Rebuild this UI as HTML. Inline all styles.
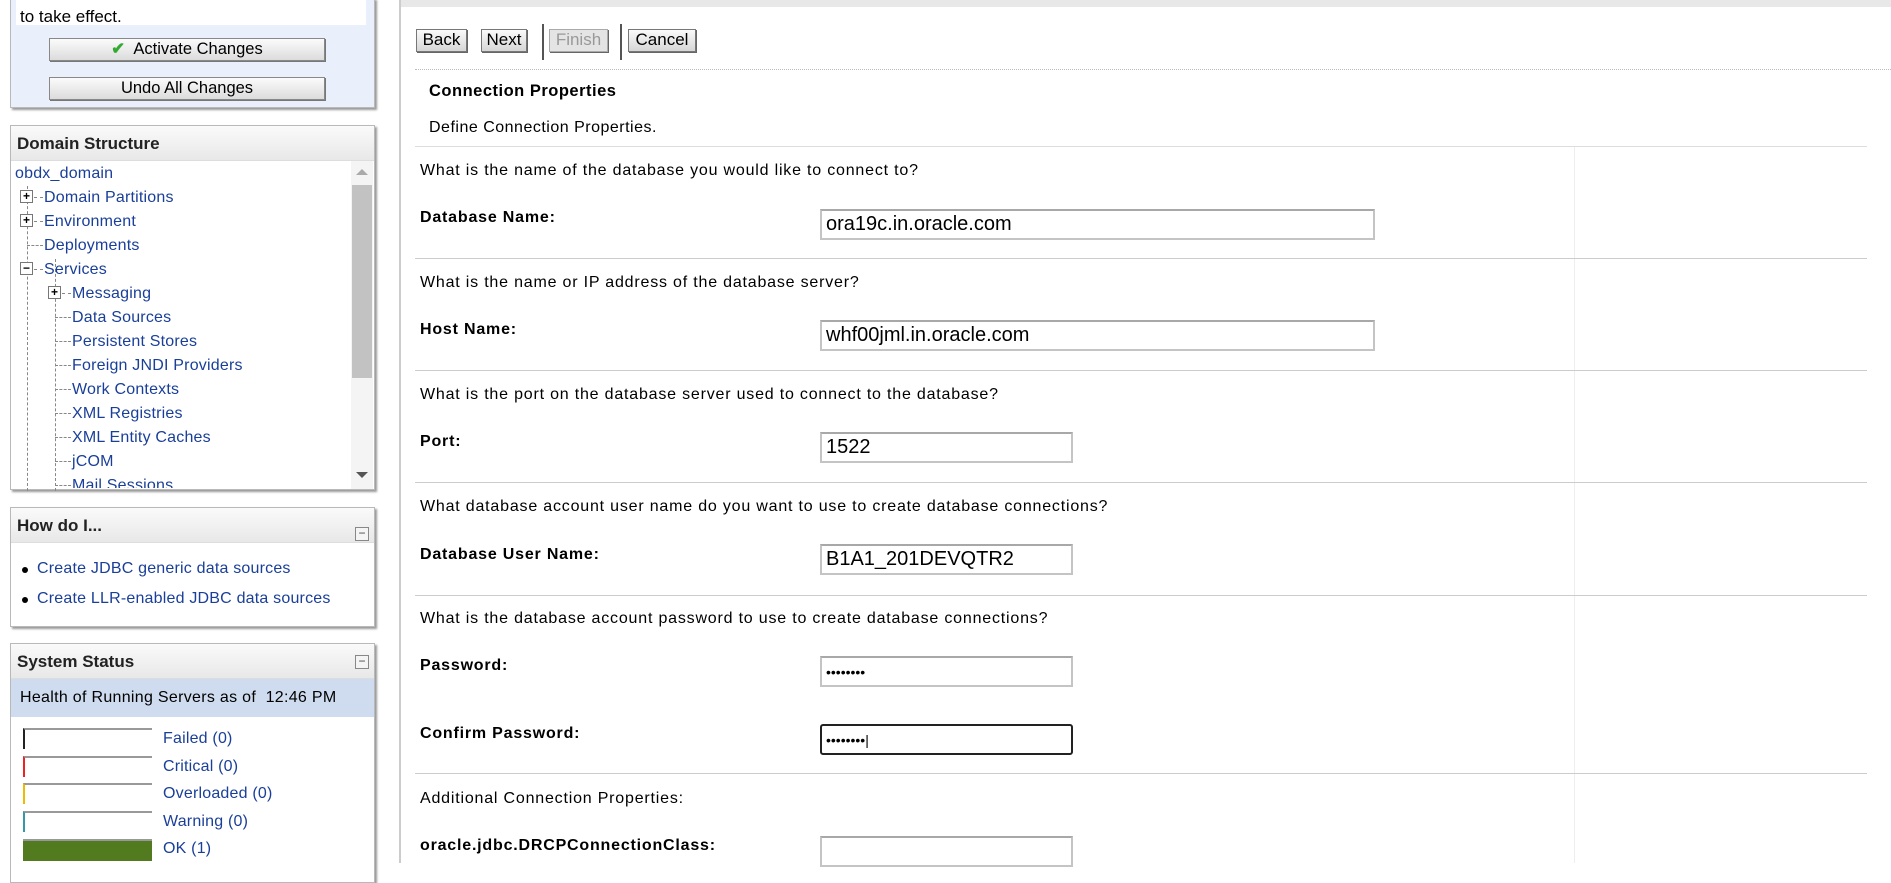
<!DOCTYPE html>
<html><head><style>
*{margin:0;padding:0;box-sizing:border-box}
body{width:1891px;height:863px;overflow:hidden;background:#fff;font-family:"Liberation Sans",Tahoma,sans-serif;position:relative;color:#000}
.a{position:absolute}
.panel{position:absolute;left:10px;width:365px;border:1px solid #b9b9b9;box-shadow:2px 2px 2px #999;background:#fff}
.hd{position:absolute;left:0;right:0;top:0;height:35px;background:linear-gradient(#fafafa,#e8e8e8);border-bottom:1px solid #ddd;font-weight:bold;font-size:17px;padding:8px 0 0 6px;color:#222}
.btn{position:absolute;border:1px solid #888;background:linear-gradient(#fbfbfb,#dcdcdc);font-size:16.5px;text-align:center;line-height:21px;box-shadow:1px 1px 0 #777}
.lk{color:#1a3f99;font-size:16px;position:absolute;white-space:nowrap;letter-spacing:0.2px}
.mn{position:absolute;width:14px;height:14px;border:1px solid #888;background:#f4f4f4;font-size:12px;line-height:10px;text-align:center;color:#444}
.pb{position:absolute;width:13px;height:13px;border:1px solid #777;background:#fff;font-size:12px;line-height:10px;text-align:center;font-weight:bold}
.q{position:absolute;left:420px;font-size:16px;letter-spacing:0.8px;white-space:nowrap}
.lb{position:absolute;left:420px;font-size:16px;font-weight:bold;letter-spacing:0.8px;white-space:nowrap}
.in{position:absolute;left:820px;height:31px;border:2px solid #c4c4c4;border-top-color:#a8a8a8;font-size:20px;padding:2px 4px;background:#fff}
.ln{position:absolute;left:415px;width:1452px;height:1px;background:#ddd}
.wb{position:absolute;top:29px;height:23px;border:1px solid #777;background:linear-gradient(#fafafa,#d6d6d6);font-size:17px;line-height:20px;text-align:center;box-shadow:1px 1px 0 #666}
.bar{position:absolute;left:23px;width:129px;height:21px;border-top:2px solid #999}
</style></head><body>

<div class="panel" style="top:-2px;height:110px;background:#e9effb">
 <div class="a" style="left:5px;top:0;width:350px;height:26px;background:#fff"></div>
 <div class="a" style="left:9px;top:8px;font-size:17px">to take effect.</div>
 <div class="btn" style="left:38px;top:39px;width:276px;height:23px"><span style="color:#3a3;font-weight:bold">&#10004;</span>&nbsp; Activate Changes</div>
 <div class="btn" style="left:38px;top:78px;width:276px;height:23px">Undo All Changes</div>
</div>

<div class="panel" style="top:125px;height:365px">
 <div class="hd">Domain Structure</div>
 <div class="a" style="left:340px;top:35px;width:22px;height:328px;background:#f4f4f4"></div>
 <div class="a" style="left:341px;top:59px;width:20px;height:193px;background:#c2c2c2"></div>
 <div class="a" style="left:345px;top:43px;width:0;height:0;border-left:6px solid transparent;border-right:6px solid transparent;border-bottom:6px solid #aaa"></div>
 <div class="a" style="left:345px;top:346px;width:0;height:0;border-left:6px solid transparent;border-right:6px solid transparent;border-top:6px solid #555"></div>
 <div class="a" style="left:16px;top:60px;height:305px;border-left:1px dashed #888"></div>
 <div class="a" style="left:44px;top:133px;height:232px;border-left:1px dashed #888"></div>
</div>
<div class="lk" style="left:15px;top:165px">obdx_domain</div>
<div class="pb" style="left:20px;top:190px">+</div><div class="a" style="left:34px;top:197px;width:9px;border-top:1px dashed #888"></div><div class="lk" style="left:44px;top:189px">Domain Partitions</div>
<div class="pb" style="left:20px;top:214px">+</div><div class="a" style="left:34px;top:221px;width:9px;border-top:1px dashed #888"></div><div class="lk" style="left:44px;top:213px">Environment</div>
<div class="a" style="left:27px;top:245px;width:16px;border-top:1px dashed #888"></div><div class="lk" style="left:44px;top:237px">Deployments</div>
<div class="pb" style="left:20px;top:262px">−</div><div class="a" style="left:34px;top:269px;width:9px;border-top:1px dashed #888"></div><div class="lk" style="left:44px;top:261px">Services</div>
<div class="pb" style="left:48px;top:286px">+</div><div class="a" style="left:62px;top:293px;width:9px;border-top:1px dashed #888"></div><div class="lk" style="left:72px;top:285px">Messaging</div>
<div class="a" style="left:55px;top:317px;width:16px;border-top:1px dashed #888"></div><div class="lk" style="left:72px;top:309px">Data Sources</div>
<div class="a" style="left:55px;top:341px;width:16px;border-top:1px dashed #888"></div><div class="lk" style="left:72px;top:333px">Persistent Stores</div>
<div class="a" style="left:55px;top:365px;width:16px;border-top:1px dashed #888"></div><div class="lk" style="left:72px;top:357px">Foreign JNDI Providers</div>
<div class="a" style="left:55px;top:389px;width:16px;border-top:1px dashed #888"></div><div class="lk" style="left:72px;top:381px">Work Contexts</div>
<div class="a" style="left:55px;top:413px;width:16px;border-top:1px dashed #888"></div><div class="lk" style="left:72px;top:405px">XML Registries</div>
<div class="a" style="left:55px;top:437px;width:16px;border-top:1px dashed #888"></div><div class="lk" style="left:72px;top:429px">XML Entity Caches</div>
<div class="a" style="left:55px;top:461px;width:16px;border-top:1px dashed #888"></div><div class="lk" style="left:72px;top:453px">jCOM</div>
<div class="a" style="left:55px;top:485px;width:16px;border-top:1px dashed #888"></div><div class="lk" style="left:72px;top:477px;height:11px;overflow:hidden">Mail Sessions</div>

<div class="panel" style="top:507px;height:120px">
 <div class="hd">How do I...</div>
 <div class="mn" style="left:344px;top:19px">−</div>
 <div class="a" style="left:11px;top:59px;width:6px;height:6px;border-radius:3px;background:#000"></div>
 <div class="a" style="left:11px;top:89px;width:6px;height:6px;border-radius:3px;background:#000"></div>
</div>
<div class="lk" style="left:37px;top:560px">Create JDBC generic data sources</div>
<div class="lk" style="left:37px;top:590px">Create LLR-enabled JDBC data sources</div>

<div class="panel" style="top:643px;height:240px">
 <div class="hd">System Status</div>
 <div class="mn" style="left:344px;top:11px">−</div>
 <div class="a" style="left:0;right:0;top:35px;height:38px;background:#cfdcef;font-size:16px;letter-spacing:0.3px;padding:10px 0 0 9px">Health of Running Servers as of &nbsp;12:46 PM</div>
</div>
<div class="bar" style="top:728px;border-left:2px solid #222"></div>
<div class="bar" style="top:756px;border-left:2px solid #e22"></div>
<div class="bar" style="top:783px;border-left:2px solid #eb0"></div>
<div class="bar" style="top:811px;border-left:2px solid #39a"></div>
<div class="bar" style="top:839px;background:#527a1e;height:22px"></div>
<div class="lk" style="left:163px;top:730px">Failed (0)</div>
<div class="lk" style="left:163px;top:758px">Critical (0)</div>
<div class="lk" style="left:163px;top:785px">Overloaded (0)</div>
<div class="lk" style="left:163px;top:813px">Warning (0)</div>
<div class="lk" style="left:163px;top:840px">OK (1)</div>

<div class="a" style="left:399px;top:0;width:2px;height:863px;background:#ccc"></div>
<div class="a" style="left:401px;top:0;width:1490px;height:7px;background:#e8e8e8"></div>
<div class="a" style="left:1574px;top:146px;width:1px;height:717px;background:#eee"></div>

<div class="wb" style="left:416px;width:51px">Back</div>
<div class="wb" style="left:481px;width:46px">Next</div>
<div class="a" style="left:542px;top:24px;width:2px;height:36px;background:#555"></div>
<div class="wb" style="left:549px;width:59px;color:#999;border-color:#aaa;background:#e4e4e4">Finish</div>
<div class="a" style="left:620px;top:24px;width:2px;height:36px;background:#555"></div>
<div class="wb" style="left:628px;width:68px">Cancel</div>
<div class="a" style="left:415px;top:69px;width:1476px;border-top:1px dotted #bbb"></div>

<div class="a" style="left:429px;top:82px;font-size:16.5px;font-weight:bold;letter-spacing:0.5px">Connection Properties</div>
<div class="a" style="left:429px;top:119px;font-size:16px;letter-spacing:0.5px">Define Connection Properties.</div>
<div class="ln" style="top:146px"></div>

<div class="q" style="top:162px">What is the name of the database you would like to connect to?</div>
<div class="lb" style="top:209px">Database Name:</div>
<div class="in" style="top:209px;width:555px">ora19c.in.oracle.com</div>
<div class="ln" style="top:258px;background:#ccc"></div>

<div class="q" style="top:274px">What is the name or IP address of the database server?</div>
<div class="lb" style="top:321px">Host Name:</div>
<div class="in" style="top:320px;width:555px">whf00jml.in.oracle.com</div>
<div class="ln" style="top:370px;background:#ccc"></div>

<div class="q" style="top:386px">What is the port on the database server used to connect to the database?</div>
<div class="lb" style="top:433px">Port:</div>
<div class="in" style="top:432px;width:253px">1522</div>
<div class="ln" style="top:482px;background:#ccc"></div>

<div class="q" style="top:498px">What database account user name do you want to use to create database connections?</div>
<div class="lb" style="top:546px">Database User Name:</div>
<div class="in" style="top:544px;width:253px">B1A1_201DEVQTR2</div>
<div class="ln" style="top:595px;background:#ccc"></div>

<div class="q" style="top:610px">What is the database account password to use to create database connections?</div>
<div class="lb" style="top:657px">Password:</div>
<div class="in" style="top:656px;width:253px;font-size:14px;padding-top:6px">&#8226;&#8226;&#8226;&#8226;&#8226;&#8226;&#8226;&#8226;</div>
<div class="lb" style="top:725px">Confirm Password:</div>
<div class="in" style="top:724px;width:253px;font-size:14px;padding-top:6px;border-color:#222;border-radius:3px">&#8226;&#8226;&#8226;&#8226;&#8226;&#8226;&#8226;&#8226;|</div>
<div class="ln" style="top:773px;background:#ccc"></div>

<div class="q" style="top:790px">Additional Connection Properties:</div>
<div class="lb" style="top:837px">oracle.jdbc.DRCPConnectionClass:</div>
<div class="in" style="top:836px;width:253px"></div>
</body></html>
